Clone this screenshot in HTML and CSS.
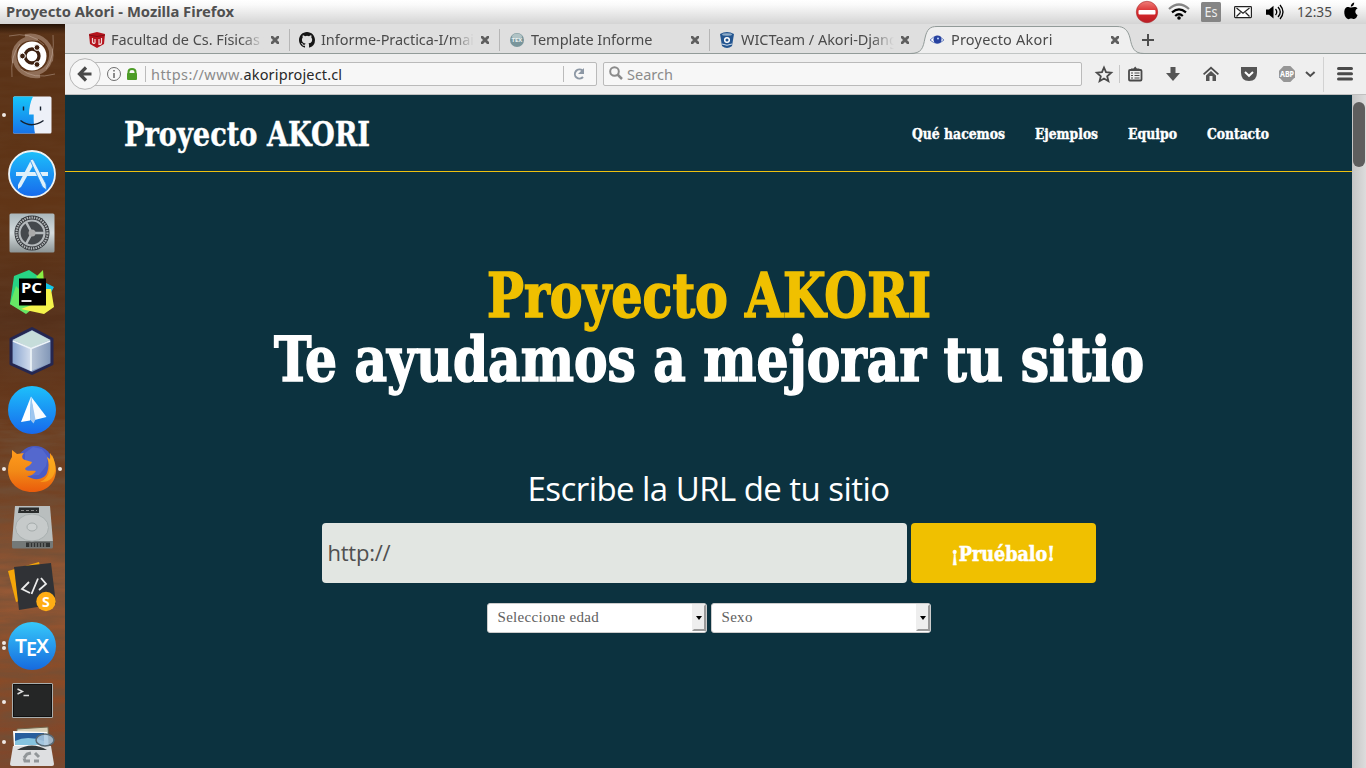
FILE: index.html
```html
<!DOCTYPE html>
<html lang="es">
<head>
<meta charset="utf-8">
<title>Proyecto Akori</title>
<link rel="stylesheet" href="styles.css">
</head>
<body>
<div class="panel">
  <span class="panel-title"><svg width="230" height="24"><text x="0" y="17" textLength="228" lengthAdjust="spacingAndGlyphs">Proyecto Akori - Mozilla Firefox</text></svg></span>
  <svg class="tray" width="232" height="24" viewBox="1134 0 232 24">
    <defs><linearGradient id="red" x2="0" y2="1"><stop stop-color="#ee7d78"/><stop offset=".5" stop-color="#d92a2c"/><stop offset="1" stop-color="#b91d25"/></linearGradient></defs>
    <circle cx="1147" cy="12" r="10.7" fill="url(#red)" stroke="#a92a2c" stroke-width=".6"/><rect x="1138.500" y="10" width="17" height="4.500" rx="1" fill="#fff"/>
    <g fill="none" stroke-width="2.2"><path d="M1169 9Q1179 0 1189 9" stroke="#858585"/><path d="M1172 12.400Q1179 6.500 1186 12.400M1175.200 16Q1179 12.500 1182.800 16" stroke="#000"/></g><circle cx="1179" cy="18" r="1.8"/>
    <rect x="1201" y="2" width="20" height="20" rx="1.5" fill="#858585"/><text x="1204.5" y="17" font-size="13.5" fill="#eee" textLength="13" lengthAdjust="spacingAndGlyphs">Es</text>
    <g fill="none" stroke="#222" stroke-width="1.2"><rect x="1234.6" y="6.6" width="16.8" height="11" rx=".8" fill="#fff"/><path d="M1236.500 8l6.500 5.200 6.500-5.200M1236.500 16.500l4-4M1249.500 16.500l-4-4"/></g>
    <path d="M1266 9.500h3l4.500-3.800v12.800l-4.500-3.800h-3z"/><path d="M1275.500 9q2.500 3 0 6M1278 7q4.500 5 0 10M1280 5q6 7 0 14" fill="none" stroke="#000" stroke-width="1.3"/>
    <text x="1297" y="17" font-size="14.500" fill="#4b4b4b" textLength="35" lengthAdjust="spacingAndGlyphs">12:35</text>
    <path d="M1351 7.500c-1.700 0-2.500-.9-4-.4-4.500 1.700-3 11.900 1.500 12.100 1 0 1.500-.7 2.700-.7s1.800.7 2.900.6c1.700-.1 2.900-2.200 3.500-4-2.900-1.300-3-5.300 0-6.500-1.800-2.500-4.600-1.300-6.600-1.100zm-.2-.8c-.2-2 1.500-3.900 3.400-4.200.2 2.200-1.400 4.200-3.400 4.200z"/>
  </svg>
</div>
<div class="desktop">
  <nav class="launcher">
    <svg class="wood" width="65" height="744"><defs><filter id="grain" x="0" y="0" width="100%" height="100%"><feTurbulence type="fractalNoise" baseFrequency=".018 .11" numOctaves="4" seed="8"/><feColorMatrix values="0 0 0 0 .16  0 0 0 0 .08  0 0 0 0 .04  1.900 0 0 0 -.55"/></filter><linearGradient id="sh" x2="0" y2="1"><stop stop-color="#241206"/><stop offset="1" stop-color="#241206" stop-opacity="0"/></linearGradient></defs><rect width="65" height="400" filter="url(#grain)" opacity=".2"/><rect y="395" width="65" height="349" filter="url(#grain)" opacity=".8"/><rect width="65" height="10" fill="url(#sh)"/></svg>
    <div class="slot"><svg viewBox="0 0 48 48"><g fill="none" stroke="#c5aa98" stroke-width="4" opacity=".5"><path d="M6 31C3 13 15 4 30 7"/><path d="M17 4c18-3 29 10 26 25"/><path d="M43 17c2 18-9 27-27 24"/><path d="M32 44C14 46 4 34 7 18"/></g><g fill="none" stroke="#d7c4b6" opacity=".4"><path d="M1 4q22-5 35 9M45 3q2 22-7 34M47 42q-22 6-34-5M4 45Q2 24 12 12"/></g><circle cx="24" cy="24" r="14.500" fill="#fff"/><circle cx="24" cy="24" r="7" fill="none" stroke="#3d2010" stroke-width="3.300"/><g fill="#3d2010" stroke="#fff"><circle cx="14.500" cy="24" r="2.900"/><circle cx="29" cy="15.500" r="2.900"/><circle cx="29" cy="32.500" r="2.900"/></g></svg></div>
    <div class="slot"><i class="dot"></i><svg viewBox="0 0 48 48"><defs><linearGradient id="fb" x2="0" y2="1"><stop stop-color="#16c5f9"/><stop offset="1" stop-color="#1873e8"/></linearGradient></defs><rect x="5" y="5.500" width="38.500" height="37" rx="1.500" fill="#edf0f8"/><path d="M25 5.500H6.500Q5 5.500 5 7V41q0 1.500 1.500 1.500H27q-1.500-7-1.300-19h-4.700Q21 14 25 5.500z" fill="url(#fb)"/><path d="M15.500 15.500v4M32.500 15.500v4M12.500 29.500q11 8.500 23 0" fill="none" stroke="#17202e" stroke-width="1.400"/></svg></div>
    <div class="slot"><svg viewBox="0 0 48 48"><defs><linearGradient id="as" x2="0" y2="1"><stop stop-color="#1dc0fb"/><stop offset="1" stop-color="#1769ec"/></linearGradient></defs><circle cx="24" cy="24" r="23" fill="url(#as)" stroke="#eef3f5" stroke-width="1.800"/><g fill="#dff1fb"><rect x="8" y="22" width="32" height="4"/><path d="M23 10l4 2-14 25-3 2v-4z"/><path d="M22 10l3-1 13 25 .5 6-4-3z" stroke="#238eee" stroke-width=".8"/></g></svg></div>
    <div class="slot"><svg viewBox="0 0 48 48"><defs><linearGradient id="st" x2="0" y2="1"><stop stop-color="#aab7bb"/><stop offset=".5" stop-color="#d5dcde"/><stop offset="1" stop-color="#8c9495"/></linearGradient></defs><rect x="1.500" y="4.500" width="45" height="39" rx="1.500" fill="url(#st)"/><circle cx="24" cy="24" r="17.500" fill="#303337"/><circle cx="24" cy="24" r="15.500" fill="none" stroke="#afb4b6" stroke-width="2.300" stroke-dasharray="1.500 .9"/><circle cx="24" cy="24" r="12.500" fill="#44484c" stroke="#b4b9bc" stroke-width="2.200"/><path d="M24 24l-6-11M24 24h13M24 24l-6 11" stroke="#b4b9bc" stroke-width="2.500"/><circle cx="24" cy="24" r="3.500" fill="#aaa"/></svg></div>
    <div class="slot"><svg viewBox="0 0 48 48"><path d="M6 8L21 2l15 10-9 26-9 7-16-9z" fill="#27d384"/><path d="M2 36L8 18l20 20-10 8z" fill="#67e765"/><path d="M28 9l7-7 1 13z" fill="#89ed43"/><path d="M36 14l10 5-6 11-7-9z" fill="#14c5e6"/><path d="M37 21h6l3 18-10 7-23-5 24-9z" fill="#f4f34b"/><rect x="11" y="10.500" width="27" height="27"/><text x="13" y="25" fill="#fff" font-size="15" font-weight="700" textLength="21" lengthAdjust="spacingAndGlyphs">PC</text><path d="M13.500 33h10" stroke="#fff" stroke-width="1.800"/></svg></div>
    <div class="slot"><svg viewBox="0 0 48 48"><defs><linearGradient id="nb"><stop stop-color="#8ca7d1"/><stop offset="1" stop-color="#d4deed"/></linearGradient><linearGradient id="nc"><stop stop-color="#b9c6d8"/><stop offset="1" stop-color="#8398b8"/></linearGradient></defs><path d="M24 1.500L44 12v25L24 46.500 3 37V12z" fill="#7b93bd" stroke="#252751" stroke-width="3" stroke-linejoin="round"/><path d="M24 3.500L42 13l-19 8L5 13z" fill="#c6ddda"/><path d="M5 14l18 8v22L5 36z" fill="url(#nb)"/><path d="M42 14l-19 8v22l19-8z" fill="url(#nc)"/><path d="M5 14l18 7.500L42 14M23 22v22" fill="none" stroke="#edf4f7" stroke-width="1.700"/></svg></div>
    <div class="slot"><svg viewBox="0 0 48 48"><circle cx="24" cy="24" r="24" fill="url(#as)"/><path d="M23 10.500L13 36l9-1.500z" fill="#fff"/><path d="M23 10.500l15.500 20.500-12 3z" fill="#f8fbff"/><path d="M23 10.500l-1 23 3.500 4 2-4z" fill="#9fc6ef"/></svg></div>
    <div class="slot"><i class="dot"></i><svg viewBox="0 0 48 48"><defs><linearGradient id="ff" x2="0" y2="1"><stop stop-color="#ff9b1d"/><stop offset=".5" stop-color="#f28a16"/><stop offset="1" stop-color="#ea5b0c"/></linearGradient></defs><circle cx="27" cy="19" r="18" fill="#495bc4"/><path d="M17 8l8-6 9 2 6 8-2 9-7 9-14 1z" fill="#5468ce"/><path d="M4 5l5 4 7-1c-3 3-2 6 1 7l7 2c-1 4-6 4-7 7 2 3 7 1 11 2-2 3-5 5-9 5 7 5 17 4 20-3 2-5 2-11 0-16l3 3V8c4 5 6 12 6 18-1 14-11 21-24 21S0 38 0 25c0-6 2-10 4-13z" fill="url(#ff)"/><path d="M39 12c5 10 3 21-7 25 9 1 14-5 15-11q1-8-3-16l-2 4z" fill="#ffb51f" opacity=".6"/></svg><i class="dot right"></i></div>
    <div class="slot"><svg viewBox="0 0 48 48"><path d="M7 2h35l3 36H4z" fill="#b9bebe"/><path d="M4 37h41v6q0 1.500-1.500 1.500h-38Q4 44.500 4 43z" fill="#747978"/><path d="M18 38.500h24v4.500H18z" fill="#303333"/><path d="M22 39v4M25 39v4M28 39v4M31 39v4M34 39v4M37 39v4" stroke="#929794"/><path d="M11 3.500h20v5.500H10z" fill="#292c2c"/><path d="M13 6.500h16" stroke="#888" stroke-dasharray="3 2"/><ellipse cx="24" cy="23.500" rx="16.500" ry="13.500" fill="#c6caca" stroke="#a9b0b0"/><ellipse cx="24" cy="23" rx="5" ry="4" fill="#cdd1d1" stroke="#a4abab"/></svg></div>
    <div class="slot"><svg viewBox="0 0 48 48"><path d="M0 8l31-9 2 8-22 31-3 1z" fill="#f5a609"/><path d="M6 4l37-4 5 41-37 6z" fill="#303236"/><path d="M21 19l-7 7 8 4M33 15l5 6-7 6M30 15.500l-6.500 15.500" fill="none" stroke="#ececec" stroke-width="1.800"/><circle cx="38" cy="38.500" r="9.700" fill="#ffad15"/><text x="34" y="43.500" font-size="14" font-weight="700" fill="#fff">S</text></svg></div>
    <div class="slot"><i class="dot double"></i><svg viewBox="0 0 48 48"><defs><linearGradient id="tx" x2="0" y2="1"><stop stop-color="#36c9fa"/><stop offset="1" stop-color="#176ade"/></linearGradient></defs><circle cx="24" cy="24" r="24" fill="url(#tx)"/><g fill="#fff" font-size="19" font-weight="600"><text x="7" y="30.500" textLength="12" lengthAdjust="spacingAndGlyphs">T</text><text x="18" y="34" textLength="11" lengthAdjust="spacingAndGlyphs">E</text><text x="28" y="30.500" textLength="13" lengthAdjust="spacingAndGlyphs">X</text></g></svg></div>
    <div class="slot terminal"><i class="dot"></i><svg viewBox="0 0 48 48"><rect x="4" y="7" width="41" height="35" rx="1.500" fill="#aaaead"/><rect x="5.500" y="8.500" width="38" height="32" fill="#252626" stroke="#111"/><path d="M9.500 13l5 2.500-5 2.500M15.500 19.500h5.500" fill="none" stroke="#ddd" stroke-width="1.400"/></svg></div>
    <div class="slot trash"><i class="dot"></i><svg viewBox="0 0 48 48"><path d="M9 6l31-2 1 15H8z" fill="#d7d0b8" stroke="#71664d"/><path d="M5 8l34 1 2 15H6z" fill="#fafafa"/><path d="M7 10h29v11H7z" fill="#285e9d"/><path d="M7 18q12-6 29 0v4H7z" fill="#86c4e0"/><path d="M5 23h38l3 18q0 2-2 2H4q-2 0-2-2z" fill="#dedfe1"/><path d="M9 27q15-9 30 0z" fill="#34383a"/><ellipse cx="37" cy="17" rx="9" ry="6" fill="#a7c6de" fill-opacity=".85" stroke="#586873" stroke-width="1.500"/><g fill="none" stroke="#929699" stroke-width="3"><path d="M16 35l3-4 4-1M27 30l4 4M31 38h-5M22 38h-5l-1-3"/></g></svg></div>
  </nav>
  <main class="browser">
    <div class="tabs">
      <div class="tab"><svg class="fav" viewBox="0 0 16 16"><path d="M0 2l8-2 8 2-1 10-7 4-7-4z" fill="#b5131c"/><path d="M3.500 6v4.500q2 2 2.500 0V7M10 7v5.500q2.500 0 2.500-2V6" fill="none" stroke="#f0d8d8" stroke-width="1.200"/><path d="M0 3l8 1.500L16 3" fill="none" stroke="#7f0d13"/></svg><span class="label">Facultad de Cs. Físicas y</span><b class="close"></b></div>
      <div class="tab"><svg class="fav" viewBox="0 0 16 16"><path fill="#151515" d="M8 0C3.580 0 0 3.580 0 8c0 3.540 2.290 6.530 5.470 7.590.4.070.55-.17.55-.38v-1.490c-2.010.37-2.530-.49-2.690-.94-.09-.23-.48-.94-.82-1.130-.28-.15-.68-.52-.01-.53.63-.01 1.080.58 1.230.82.72 1.210 1.870.87 2.330.66.07-.52.28-.87.51-1.070-1.780-.2-3.640-.89-3.640-3.950 0-.87.31-1.590.82-2.150-.08-.2-.36-1.020.08-2.120 0 0 .67-.21 2.200.82a7.600 7.600 0 014 0c1.530-1.040 2.200-.82 2.200-.82.44 1.100.16 1.920.08 2.120.51.56.82 1.270.82 2.150 0 3.070-1.870 3.750-3.650 3.950.29.25.54.73.54 1.480v2.200c0 .21.15.46.55.38A8.010 8.010 0 0016 8c0-4.420-3.580-8-8-8z"/></svg><span class="label">Informe-Practica-I/main</span><b class="close"></b></div>
      <div class="tab"><svg class="fav" viewBox="0 0 16 16"><circle cx="8" cy="8" r="7" fill="#79959b"/><ellipse cx="8" cy="4.500" rx="5" ry="3" fill="#b0c3c5"/><text x="2.500" y="10" font-size="6" font-weight="700" fill="#e9f1f1">TEX</text></svg><span class="label">Template Informe</span><b class="close"></b></div>
      <div class="tab last"><svg class="fav" viewBox="0 0 16 16"><path d="M1 2l2 12q5 4 10 0l2-12q-7-4-14 0z" fill="#235590"/><ellipse cx="8" cy="2.500" rx="5" ry="1.200" fill="#8dabc8"/><circle cx="8" cy="8" r="2.300" fill="none" stroke="#fff" stroke-width="1.500"/><path d="M3 12q5 2.500 10 0" stroke="#d2dfec" fill="none"/></svg><span class="label">WICTeam / Akori-Django</span><b class="close"></b></div>
      <div class="tab active"><svg class="shape" width="236" height="30"><path d="M0 29.500C12 29.500 13 24 15 14 17 5 20 2.500 27 2.500H207C214 2.500 218 6 220 14 222 24 224 29.500 234 29.500" fill="#efefef" stroke="#929b99"/><path d="M2 30.500h230" stroke="#efefef" stroke-width="1"/></svg><svg class="fav" viewBox="0 0 16 16"><path d="M1 8Q8 .5 15 8 8 14.500 1 8z" fill="#fff" stroke="#6c83c0" stroke-width="1"/><circle cx="8.500" cy="7.500" r="4" fill="#2742a0"/><circle cx="9" cy="6.500" r="1" fill="#bad7ff"/></svg><span class="label current">Proyecto Akori</span><b class="close"></b></div>
      <svg class="plus" width="12" height="12"><path d="M6 0v12M0 6h12" stroke="#4d4d4d" stroke-width="2"/></svg>
    </div>
    <div class="toolbar">
      <svg class="back" width="32" height="32"><circle cx="16" cy="16" r="15.300" fill="#f7f7f7" stroke="#b5b5b5"/><path d="M22.500 16H11M17 9.500L10.500 16l6.500 6.500" fill="none" stroke="#4a4a4a" stroke-width="3.200"/></svg>
      <div class="url"><svg width="48" height="22"><circle cx="13" cy="11" r="6.500" fill="none" stroke="#6e6e6e"/><path d="M13 10v5M13 7v1.500" stroke="#666" stroke-width="1.500"/><path d="M27.500 11V9q0-3 3.500-3t3.500 3v2" fill="none" stroke="#4c9c26" stroke-width="2"/><rect x="26" y="10" width="10" height="7" rx="1" fill="#4c9c26"/><path d="M44.500 3v16" stroke="#bbb"/></svg><span class="address">https://www.<em>akoriproject.cl</em></span><svg class="reload" width="33" height="22"><path d="M.5 3v16" stroke="#bbb"/><path d="M19.500 7.500A4.600 4.600 0 1 0 20 14" fill="none" stroke="#8d98a5" stroke-width="2"/><path d="M21 5v6h-6z" fill="#8d98a5"/></svg></div>
      <div class="search"><svg width="16" height="16"><circle cx="5.500" cy="5.500" r="4.300" fill="none" stroke="#8b8b8b" stroke-width="2"/><path d="M8.500 8.500l4.500 4.500" stroke="#8b8b8b" stroke-width="2.500"/></svg><span>Search</span></div>
      <svg class="tools" width="272" height="40" viewBox="1094 54 272 40"><g fill="none" stroke="#4a4a4a" stroke-width="1.800"><path d="M1104 67.500l2 4.700 5.200.5-4 3.500 1.200 5-4.400-2.700-4.400 2.700 1.200-5-4-3.500 5.200-.5z"/><rect x="1129" y="70" width="12.500" height="10.500" rx="1"/><path d="M1131 73h2M1134.500 73h5M1131 75.500h2M1134.500 75.500h5M1131 78h2M1134.500 78h5" stroke-width="1.200"/></g><path d="M1131 70v-1.500h2.500l1.700-2 1.700 2h2.500V70z" fill="#4a4a4a"/><path d="M1119.500 65v18" stroke="#c7c7c7"/><path d="M1170.500 67h5v6h4.500l-7 8-7-8h4.500z" fill="#555"/><path d="M1211 66.500l8 7.200-1.200 1.300-6.800-6-6.800 6-1.200-1.300z" fill="#4d4d4d"/><path d="M1206 75.500l5-4.500 5 4.500V81h-3.500v-5h-3v5h-3.500z" fill="#555"/><path d="M1241 67h16v5.500q0 8.500-8 8.500t-8-8.500z" fill="#555"/><path d="M1245 72l4 3.800 4-3.800" fill="none" stroke="#fff" stroke-width="2"/><path d="M1283.700 66h6.600l4.700 4.700v6.600l-4.700 4.700h-6.600l-4.700-4.700v-6.600z" fill="#969696"/><text x="1280" y="77.300" fill="#fff" font-size="8.500" font-weight="700" textLength="14" lengthAdjust="spacingAndGlyphs">ABP</text><path d="M1306 72l4.300 4 4.300-4" fill="none" stroke="#4d4d4d" stroke-width="2"/><path d="M1323.500 57v35" stroke="#d2d2d2"/><path d="M1338.500 68.500h13M1338.500 73.700h13M1338.500 79h13" stroke="#4a4a4a" stroke-width="3" stroke-linecap="round"/></svg>
    </div>
    <div class="viewport">
      <div class="page">
        <header class="site-header">
          <svg class="slab" width="246" height="50"><text x="0" y="37.500" font-size="33" textLength="246" lengthAdjust="spacingAndGlyphs">Proyecto AKORI</text></svg>
          <nav class="links">
            <svg class="slab" width="93" height="24"><text y="18" textLength="93" lengthAdjust="spacingAndGlyphs">Qué hacemos</text></svg>
            <svg class="slab" width="63" height="24"><text y="18" textLength="63" lengthAdjust="spacingAndGlyphs">Ejemplos</text></svg>
            <svg class="slab" width="49" height="24"><text y="18" textLength="49" lengthAdjust="spacingAndGlyphs">Equipo</text></svg>
            <svg class="slab" width="62" height="24"><text y="18" textLength="62" lengthAdjust="spacingAndGlyphs">Contacto</text></svg>
          </nav>
        </header>
        <section class="hero">
          <h1><svg class="slab gold" width="444" height="64"><text x="0" y="48.500" textLength="444" lengthAdjust="spacingAndGlyphs">Proyecto AKORI</text></svg><svg class="slab" width="870" height="64"><text x="0" y="48.500" textLength="870" lengthAdjust="spacingAndGlyphs">Te ayudamos a mejorar tu sitio</text></svg></h1>
          <h2>Escribe la URL de tu sitio</h2>
          <div class="row"><div class="input">http://</div><div class="button"><svg class="slab" width="104" height="30"><text y="23" textLength="104" lengthAdjust="spacingAndGlyphs">¡Pruébalo!</text></svg></div></div>
          <div class="row selects"><div class="select"><span>Seleccione edad</span><i></i></div><div class="select"><span>Sexo</span><i></i></div></div>
        </section>
      </div>
      <div class="scroll"><div class="thumb"></div></div>
    </div>
  </main>
</div>
</body>
</html>
```
FILE: styles.css
```css
* { box-sizing: border-box; }
body { margin: 0; width: 1366px; height: 768px; overflow: hidden; font-family: "Noto Sans", "Open Sans", sans-serif; color: #4b4b4b; }
svg { display: block; flex: none; overflow: visible; }
.panel { height: 24px; display: flex; justify-content: space-between; padding-left: 6px; background: linear-gradient(#fff, #fafafa 20%, #d4d4d4); }
.panel-title { font-size: 14.5px; font-weight: 700; }
.panel-title text { fill: #505050; }
.desktop { display: flex; height: 744px; }
.launcher { position: relative; width: 65px; flex: none; padding-top: 2px; overflow: hidden; background: linear-gradient(#583116, #613516 25%, #55301a 40%, #6b3a1b 54%, #744426 64%, #965a37 75%, #8a4b27 88%, #80452a); }
.wood { position: absolute; left: 0; top: 0; }
.slot { position: relative; height: 59px; display: flex; align-items: center; padding-left: 8px; }
.slot svg { width: 48px; height: 48px; }
.terminal { height: 50px; }
.trash { height: 44px; }
.dot { position: absolute; left: 2px; top: 28px; width: 4px; height: 4px; border-radius: 50%; background: #eee8e4; }
.dot.right { left: 58px; }
.dot.double { top: 25px; box-shadow: 0 5px #eee8e4; }
.terminal .dot { top: 25px; }
.trash .dot { top: 15px; }
.browser { flex: 1; display: flex; flex-direction: column; min-width: 0; }
.tabs { height: 30px; flex: none; background: #dfdfdf; border-bottom: 1px solid #929b99; padding-left: 14px; display: flex; align-items: center; }
.tab { position: relative; width: 210px; height: 29px; padding: 2px 10px 0; display: flex; align-items: center; font-size: 14.5px; }
.tab::after { content: ""; position: absolute; right: -1px; top: 5px; height: 22px; width: 1px; background: #b6b6b6; }
.tab.last::after, .active::after { display: none; }
.fav { width: 16px; height: 16px; position: relative; }
.label { position: relative; top: -1px; margin-left: 6px; width: 153px; white-space: nowrap; overflow: hidden; letter-spacing: -.05px; -webkit-mask-image: linear-gradient(90deg, #000 85%, transparent); mask-image: linear-gradient(90deg, #000 85%, transparent); }
.current { letter-spacing: .2px; }
.close { position: relative; margin-left: 7px; width: 8px; height: 8px; flex: none; background: linear-gradient(45deg, transparent 37%, #5f5f5f 38% 62%, transparent 63%), linear-gradient(-45deg, transparent 37%, #5f5f5f 38% 62%, transparent 63%); }
.shape { position: absolute; left: -9px; top: 0; }
.plus { margin: 3px 0 0 13px; }
.toolbar { height: 41px; flex: none; background: #efefef; border-bottom: 1px solid #c0c0c0; display: flex; align-items: center; padding-left: 4px; font-size: 14.5px; }
.back { z-index: 1; }
.url { height: 24px; width: 505px; margin-left: -9px; padding-left: 9px; border: 1px solid #bababa; border-radius: 2px; background: #f7f7f7; display: flex; align-items: center; }
.url > svg:first-child { margin-left: -1px; }
.address { margin-left: 2px; color: #8b8b8b; flex: 1; white-space: nowrap; letter-spacing: .42px; }
.address em { font-style: normal; color: #282828; letter-spacing: .15px; }
.search { height: 24px; width: 479px; margin-left: 6px; padding-left: 5px; border: 1px solid #bababa; border-radius: 2px; background: #f7f7f7; color: #8b8b8b; display: flex; align-items: center; gap: 2px; }
.tools { margin-left: auto; }
.viewport { flex: 1; display: flex; min-height: 0; }
.page { flex: 1; background: #0c323f; color: #fff; }
.scroll { width: 14px; padding: 7px 1px; background: linear-gradient(90deg, #c5c5c5, #dcdcdc); }
.thumb { height: 65px; border-radius: 6px; background: #5e5e5e; }
.slab { font-family: "DejaVu Serif Condensed", "DejaVu Serif", serif; font-weight: 700; fill: #fff; stroke: #fff; stroke-width: .025em; }
.site-header { height: 77px; border-bottom: 1px solid #efc010; display: flex; align-items: center; justify-content: space-between; padding: 0 83px 0 59px; }
.links { display: flex; gap: 30px; font-size: 14.5px; }
.hero { display: flex; flex-direction: column; align-items: center; padding-top: 96px; }
h1 { margin: 0; display: flex; flex-direction: column; align-items: center; font-size: 61px; }
.gold { fill: #f0c000; stroke: #f0c000; }
h2 { margin: 67px 0 0; height: 60px; font: 400 33px/52px "Open Sans", sans-serif; letter-spacing: -.55px; }
.row { display: flex; gap: 4px; }
.input { width: 585px; height: 60px; padding-left: 6px; border-radius: 4px; background: #e2e6e2; color: #505050; font: 22px/59px "Open Sans", sans-serif; letter-spacing: -.25px; }
.button { width: 185px; height: 60px; border-radius: 4px; background: #f0c000; display: flex; align-items: center; justify-content: center; font-size: 20px; }
.selects { margin-top: 20px; }
.select { width: 220px; height: 30px; padding: 0 0 1px 10px; border: 1px solid #ccc; border-radius: 3px; background: #fff; color: #606060; display: flex; align-items: center; justify-content: space-between; font: 15px "Liberation Serif", serif; letter-spacing: .3px; }
.select i { position: relative; width: 14px; height: 27px; border: 2px outset #eee; background: #eee; }
.select i::after { content: ""; position: absolute; left: 2px; top: 10px; border: 3px solid transparent; border-top: 4px solid #000; border-bottom: 0; }
```
